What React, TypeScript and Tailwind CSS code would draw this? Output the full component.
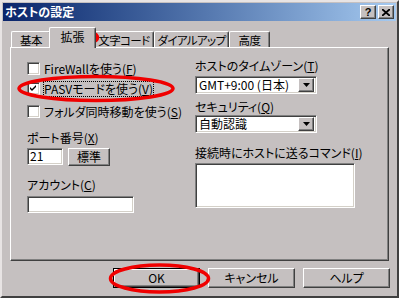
import React from 'react'

const raised =
  'border border-t-white border-l-white border-b-[#404040] border-r-[#404040] shadow-[inset_-1px_-1px_0_#808080]'
const sunken =
  'border border-t-[#808080] border-l-[#808080] border-b-white border-r-white shadow-[inset_1px_1px_0_#404040,inset_-1px_-1px_0_#d4d0c8]'

function Key({ k }: { k: string }) {
  return (
    <>
      (<span className="underline underline-offset-[1px]">{k}</span>)
    </>
  )
}

function Checkbox({ checked }: { checked?: boolean }) {
  return (
    <div className={`w-[13px] h-[13px] bg-white flex items-center justify-center shrink-0 ${sunken}`}>
      {checked && (
        <svg width="7" height="7" viewBox="0 0 7 7">
          <path d="M0 2 L2 4 L6 0 L6 2 L2 6 L0 4 Z" fill="#000" />
        </svg>
      )}
    </div>
  )
}

function Select({ value }: { value: string }) {
  return (
    <div className={`w-[122px] h-[18px] bg-white flex items-center pl-[3px] pr-[2px] ${sunken}`}>
      <span className="flex-1 leading-[14px] whitespace-nowrap">{value}</span>
      <div className={`w-[16px] h-[14px] bg-[#c5c0c0] flex items-center justify-center ${raised}`}>
        <svg width="7" height="4" viewBox="0 0 7 4">
          <path d="M0 0 H7 L3.5 4 Z" fill="#000" />
        </svg>
      </div>
    </div>
  )
}

const tabs = [
  { label: '基本', w: 'w-[40px]' },
  { label: '拡張', w: 'w-[47px]', active: true },
  { label: '文字コード', w: 'w-[60px]' },
  { label: 'ダイアルアップ', w: 'w-[75px]' },
  { label: '高度', w: 'w-[41px]' },
]

export default function App() {
  return (
    <div className="relative w-[399px] h-[298px] overflow-hidden bg-[#c5c0c0] text-black text-[12px] leading-[16px] font-['Noto_Sans_CJK_JP',sans-serif] [font-feature-settings:'palt'] border-2 border-t-[#e8e4e4] border-l-[#e8e4e4] border-r-[#404040] border-b-[#404040] p-px flex flex-col">
      {/* Title bar */}
      <div className="h-[18px] flex items-center justify-between pl-[2px] pr-[2px] bg-linear-to-r from-[#0a246a] to-[#a6caf0]">
        <span className="text-white font-bold">ホストの設定</span>
        <div className="flex gap-[2px]">
          <div className={`w-[16px] h-[14px] bg-[#c5c0c0] flex items-center justify-center font-bold text-[11px] leading-none font-['Liberation_Sans',sans-serif] ${raised}`}>
            ?
          </div>
          <div className={`w-[16px] h-[14px] bg-[#c5c0c0] flex items-center justify-center ${raised}`}>
            <svg width="8" height="7" viewBox="0 0 8 7">
              <path d="M0 0 L8 7 M8 0 L0 7" stroke="#000" strokeWidth="1.8" />
            </svg>
          </div>
        </div>
      </div>

      <div className="flex-1 px-[7px] flex flex-col">
        {/* Tabs */}
        <div className="mt-[6px] h-[20px] flex items-end pl-px">
          {tabs.map((t) =>
            t.active ? (
              <div
                key={t.label}
                className={`${t.w} -mx-[2px] -mb-px h-[21px] relative z-10 bg-[#c5c0c0] flex items-center justify-center pb-[2px] whitespace-nowrap border-t border-l border-r border-t-white border-l-white border-r-[#404040] rounded-t-[2px] shadow-[inset_-1px_0_0_#808080]`}
              >
                {t.label}
              </div>
            ) : (
              <div
                key={t.label}
                className={`${t.w} shrink-0 h-[16px] flex items-center justify-center whitespace-nowrap text-[11.5px] tracking-[-0.6px] border-t border-l border-r border-t-white border-l-white border-r-[#404040] rounded-t-[2px] shadow-[inset_-1px_0_0_#808080]`}
              >
                {t.label}
              </div>
            )
          )}
        </div>

        {/* Panel */}
        <div className="h-[214px] border border-t-white border-l-white border-b-[#404040] border-r-[#404040] shadow-[inset_-1px_-1px_0_#808080] flex pl-[16px]">
          {/* Left column */}
          <div className="w-[168px] pt-[14px] flex flex-col">
            <div className="h-[13px] flex items-center gap-[4px]">
              <Checkbox />
              <span>
                FireWallを使う<Key k="F" />
              </span>
            </div>
            <div className="mt-[7px] h-[13px] flex items-center gap-[3px]">
              <Checkbox checked />
              <span className="px-px outline-1 outline-dotted outline-black -outline-offset-1 leading-[16px]">
                PASVモードを使う<Key k="V" />
              </span>
            </div>
            <div className="mt-[10px] h-[13px] flex items-center gap-[4px]">
              <Checkbox />
              <span className="whitespace-nowrap">
                フォルダ同時移動を使う<Key k="S" />
              </span>
            </div>

            <div className="mt-[12px]">
              ポート番号<Key k="X" />
            </div>
            <div className="mt-[2px] flex items-start">
              <div className={`w-[36px] h-[17px] bg-white pl-[2px] leading-[14px] ${sunken}`}>21</div>
              <div className={`ml-[5px] w-[42px] h-[18px] flex items-center justify-center ${raised}`}>標準</div>
            </div>

            <div className="mt-[11px]">
              アカウント<Key k="C" />
            </div>
            <div className={`mt-[3px] w-[107px] h-[17px] bg-white ${sunken}`} />
          </div>

          {/* Right column */}
          <div className="pt-[10px] flex flex-col">
            <div className="whitespace-nowrap">
              ホストのタイムゾーン<Key k="T" />
            </div>
            <div className="mt-[2px]">
              <Select value="GMT+9:00 (日本)" />
            </div>
            <div className="mt-[5px]">
              セキュリティ<Key k="Q" />
            </div>
            <div>
              <Select value="自動認識" />
            </div>
            <div className="mt-[12px] whitespace-nowrap">
              接続時にホストに送るコマンド<Key k="I" />
            </div>
            <div className={`mt-[2px] w-[160px] h-[45px] bg-white ${sunken}`} />
          </div>
        </div>

        {/* Buttons */}
        <div className="mt-[7px] flex justify-end gap-[8px] -mr-px">
          <div className="w-[87px] h-[20px] border border-black flex">
            <div className={`flex-1 flex items-center justify-center ${raised}`}>OK</div>
          </div>
          <div className={`w-[87px] h-[20px] flex items-center justify-center ${raised}`}>キャンセル</div>
          <div className={`w-[87px] h-[20px] flex items-center justify-center ${raised}`}>ヘルプ</div>
        </div>
      </div>

      {/* Red annotation ellipses */}
      <svg className="absolute left-0 top-0 pointer-events-none" width="399" height="298" viewBox="0 0 399 298">
        <ellipse cx="74.5" cy="35.5" rx="21" ry="7.5" fill="none" stroke="#f00000" strokeWidth="3.5" />
        <ellipse cx="94" cy="86.5" rx="77" ry="12" fill="none" stroke="#f00000" strokeWidth="3.5" />
        <ellipse cx="157.5" cy="276.5" rx="49" ry="13.5" fill="none" stroke="#f00000" strokeWidth="3.5" />
      </svg>
    </div>
  )
}
